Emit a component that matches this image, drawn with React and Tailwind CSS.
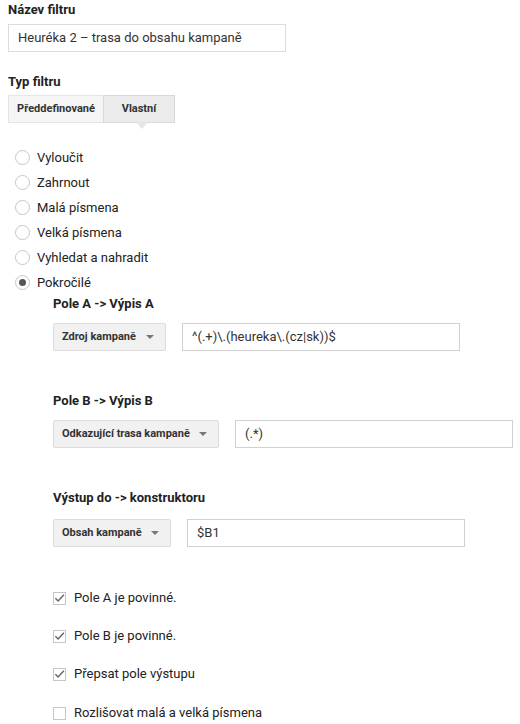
import React from 'react';

const font = { fontFamily: 'Roboto, "Noto Sans", Arial, sans-serif' };

function Radio({ label, checked }) {
  return (
    <div className="flex items-center h-[25px]">
      <span className="w-[15px] h-[15px] rounded-full border border-[#c6c6c6] bg-white flex items-center justify-center mr-[7px]">
        {checked && <span className="w-[7px] h-[7px] rounded-full bg-[#555]" />}
      </span>
      <span className="text-[13px] text-[#222]">{label}</span>
    </div>
  );
}

function Check({ label, checked }) {
  return (
    <div className="flex items-center h-[20px]">
      <span className="w-[13px] h-[13px] border border-[#c6c6c6] bg-white flex items-center justify-center mr-[8px]">
        {checked && (
          <svg width="12" height="10" viewBox="0 0 12 10" className="-mt-[1px]">
            <path d="M1.5 5.2 L4.5 8.2 L10.8 1.5" fill="none" stroke="#666" strokeWidth="1.6" />
          </svg>
        )}
      </span>
      <span className="text-[13px] text-[#222]">{label}</span>
    </div>
  );
}

function FieldRow({ select, selectWidth, value }) {
  return (
    <div className="flex items-center gap-[16px]">
      <div className={`h-[28px] ${selectWidth} bg-[#f1f1f1] border border-[#dcdcdc] rounded-[2px] flex items-center justify-between pl-[8px] pr-[11px]`}>
        <span className="text-[11px] font-bold text-[#333]">{select}</span>
        <span className="w-0 h-0 border-l-[4px] border-r-[4px] border-t-[4px] border-l-transparent border-r-transparent border-t-[#777]" />
      </div>
      <div className="h-[28px] w-[278px] border border-[#d0d0d0] bg-white flex items-center px-[9px] text-[13px] text-[#333]">
        {value}
      </div>
    </div>
  );
}

export default function App() {
  return (
    <div className="bg-white w-[520px] h-[724px] overflow-hidden pl-[8px]" style={font}>
      <div className="text-[13px] font-bold text-[#222] leading-[16px] pt-[2px]">Název filtru</div>
      <div className="mt-[6px] h-[28px] w-[278px] border border-[#dcdcdc] flex items-center px-[9px] text-[13px] text-[#333]">
        Heuréka 2 – trasa do obsahu kampaně
      </div>

      <div className="mt-[22px] text-[13px] font-bold text-[#222] leading-[16px]">Typ filtru</div>
      <div className="mt-[5px] flex h-[28px]">
        <div className="w-[95px] bg-[#f5f5f5] border border-[#e5e5e5] border-r-0 flex items-center justify-center text-[11px] font-bold text-[#333]">
          Předdefinované
        </div>
        <div className="relative w-[72px] bg-[#ebebeb] border border-[#d9d9d9] flex items-center justify-center text-[11px] font-bold text-[#333]">
          Vlastní
          <span className="absolute left-[32px] top-[26px] w-0 h-0 border-l-[6px] border-r-[6px] border-t-[7px] border-l-transparent border-r-transparent border-t-[#e5e5e5]" />
        </div>
      </div>

      <div className="mt-[22px] ml-[7px] flex flex-col">
        <Radio label="Vyloučit" />
        <Radio label="Zahrnout" />
        <Radio label="Malá písmena" />
        <Radio label="Velká písmena" />
        <Radio label="Vyhledat a nahradit" />
        <Radio label="Pokročilé" checked />
      </div>

      <div className="ml-[45px]">
        <div className="mt-[1px] text-[13px] font-bold text-[#222] leading-[16px]">Pole A -&gt; Výpis A</div>
        <div className="mt-[11px]">
          <FieldRow select="Zdroj kampaně" selectWidth="w-[113px]" value="^(.+)\.(heureka\.(cz|sk))$" />
        </div>

        <div className="mt-[42px] text-[13px] font-bold text-[#222] leading-[16px]">Pole B -&gt; Výpis B</div>
        <div className="mt-[11px]">
          <FieldRow select="Odkazující trasa kampaně" selectWidth="w-[166px]" value="(.*)" />
        </div>

        <div className="mt-[42px] text-[13px] font-bold text-[#222] leading-[16px]">Výstup do -&gt; konstruktoru</div>
        <div className="mt-[13px]">
          <FieldRow select="Obsah kampaně" selectWidth="w-[118px]" value="$B1" />
        </div>

        <div className="mt-[41px] flex flex-col gap-[17px]">
          <Check label="Pole A je povinné." checked />
          <div className="mt-[1px]"><Check label="Pole B je povinné." checked /></div>
          <div className="mt-[1px]"><Check label="Přepsat pole výstupu" checked /></div>
          <div className="mt-[2px]"><Check label="Rozlišovat malá a velká písmena" /></div>
        </div>
      </div>
    </div>
  );
}
